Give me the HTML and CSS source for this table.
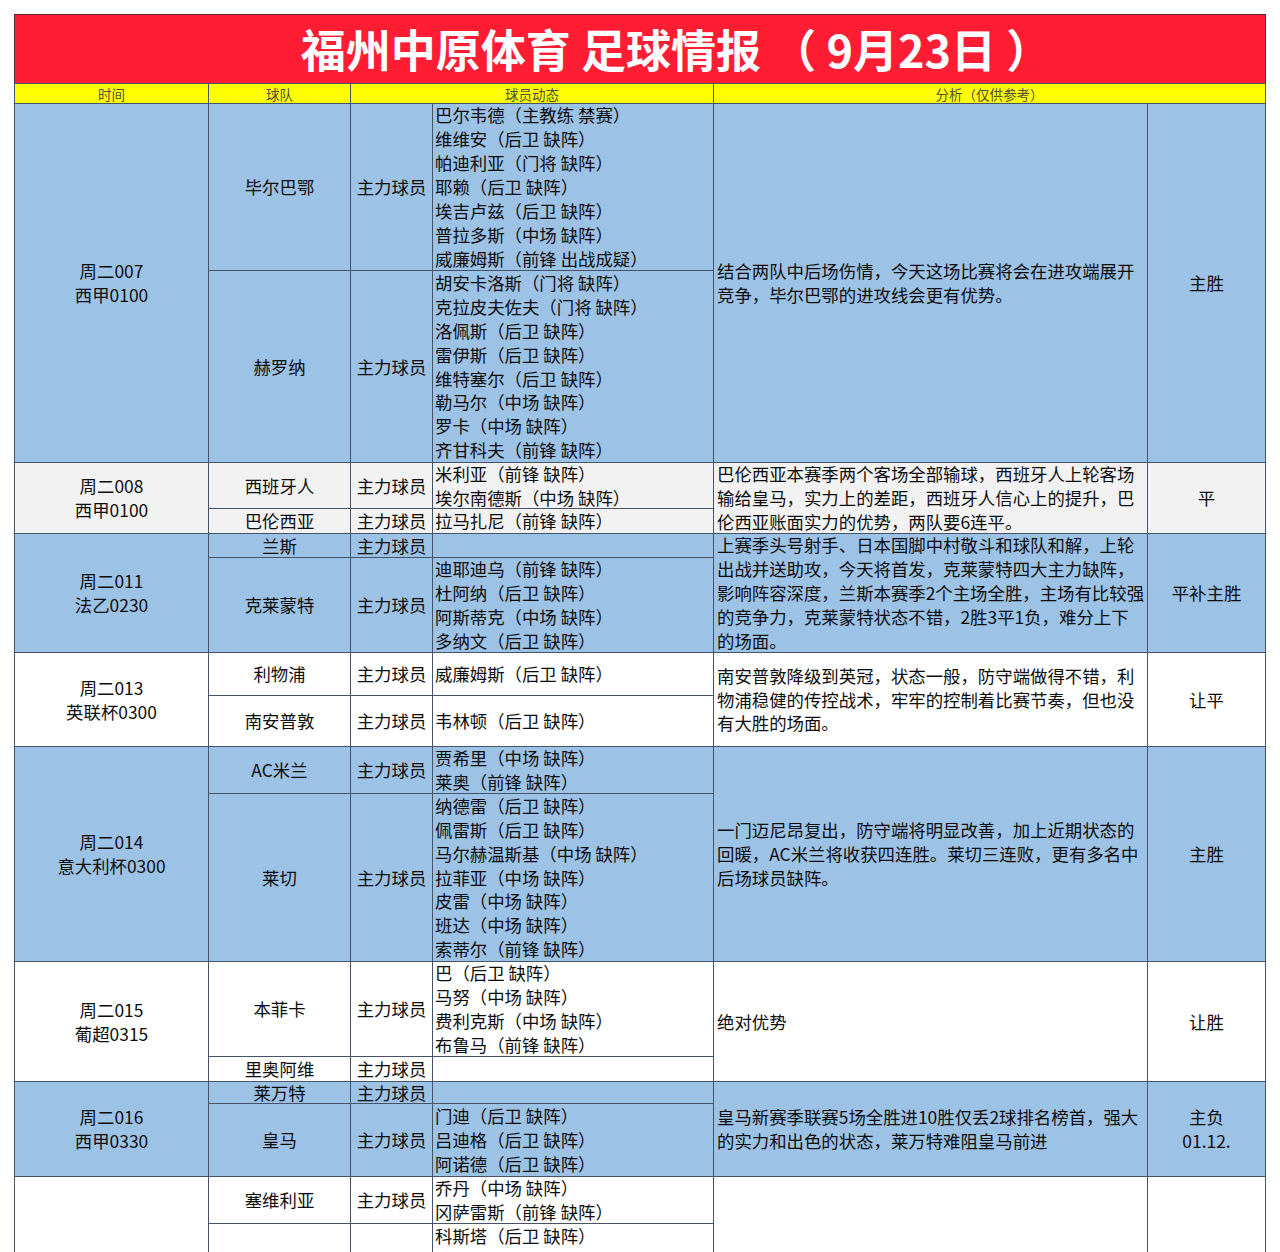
FILE: index.html
```html
<!DOCTYPE html>
<html lang="zh-CN">
<head>
<meta charset="utf-8">
<title>福州中原体育 足球情报</title>
<link rel="stylesheet" href="styles.css">
</head>
<body>
<div class="page">
  <div class="sheet">
    <div class="banner">福州中原体育 足球情报 （ 9月23日 ）</div>
    <div class="grid">
      <div class="hdr">时间</div>
      <div class="hdr">球队</div>
      <div class="hdr span2">球员动态</div>
      <div class="hdr span2">分析（仅供参考）</div>

      <div class="group blue">
        <div class="time">周二007<br>西甲0100</div>
        <div class="team">毕尔巴鄂</div>
        <div class="lbl">主力球员</div>
        <div class="pl">巴尔韦德（主教练 禁赛）<br>维维安（后卫 缺阵）<br>帕迪利亚（门将 缺阵）<br>耶赖（后卫 缺阵）<br>埃吉卢兹（后卫 缺阵）<br>普拉多斯（中场 缺阵）<br>威廉姆斯（前锋 出战成疑）</div>
        <div class="ana">结合两队中后场伤情，今天这场比赛将会在进攻端展开<br>竞争，毕尔巴鄂的进攻线会更有优势。</div>
        <div class="res">主胜</div>
        <div class="team">赫罗纳</div>
        <div class="lbl">主力球员</div>
        <div class="pl">胡安卡洛斯（门将 缺阵）<br>克拉皮夫佐夫（门将 缺阵）<br>洛佩斯（后卫 缺阵）<br>雷伊斯（后卫 缺阵）<br>维特塞尔（后卫 缺阵）<br>勒马尔（中场 缺阵）<br>罗卡（中场 缺阵）<br>齐甘科夫（前锋 缺阵）</div>
      </div>

      <div class="group gray">
        <div class="time">周二008<br>西甲0100</div>
        <div class="team">西班牙人</div>
        <div class="lbl">主力球员</div>
        <div class="pl">米利亚（前锋 缺阵）<br>埃尔南德斯（中场 缺阵）</div>
        <div class="ana">巴伦西亚本赛季两个客场全部输球，西班牙人上轮客场<br>输给皇马，实力上的差距，西班牙人信心上的提升，巴<br>伦西亚账面实力的优势，两队要6连平。</div>
        <div class="res">平</div>
        <div class="team">巴伦西亚</div>
        <div class="lbl">主力球员</div>
        <div class="pl">拉马扎尼（前锋 缺阵）</div>
      </div>

      <div class="group blue">
        <div class="time">周二011<br>法乙0230</div>
        <div class="team">兰斯</div>
        <div class="lbl">主力球员</div>
        <div class="pl"></div>
        <div class="ana">上赛季头号射手、日本国脚中村敬斗和球队和解，上轮<br>出战并送助攻，今天将首发，克莱蒙特四大主力缺阵，<br>影响阵容深度，兰斯本赛季2个主场全胜，主场有比较强<br>的竞争力，克莱蒙特状态不错，2胜3平1负，难分上下<br>的场面。</div>
        <div class="res">平补主胜</div>
        <div class="team">克莱蒙特</div>
        <div class="lbl">主力球员</div>
        <div class="pl">迪耶迪乌（前锋 缺阵）<br>杜阿纳（后卫 缺阵）<br>阿斯蒂克（中场 缺阵）<br>多纳文（后卫 缺阵）</div>
      </div>

      <div class="group white">
        <div class="time">周二013<br>英联杯0300</div>
        <div class="team">利物浦</div>
        <div class="lbl">主力球员</div>
        <div class="pl">威廉姆斯（后卫 缺阵）</div>
        <div class="ana">南安普敦降级到英冠，状态一般，防守端做得不错，利<br>物浦稳健的传控战术，牢牢的控制着比赛节奏，但也没<br>有大胜的场面。</div>
        <div class="res">让平</div>
        <div class="team">南安普敦</div>
        <div class="lbl">主力球员</div>
        <div class="pl">韦林顿（后卫 缺阵）</div>
      </div>

      <div class="group blue">
        <div class="time">周二014<br>意大利杯0300</div>
        <div class="team">AC米兰</div>
        <div class="lbl">主力球员</div>
        <div class="pl">贾希里（中场 缺阵）<br>莱奥（前锋 缺阵）</div>
        <div class="ana">一门迈尼昂复出，防守端将明显改善，加上近期状态的<br>回暖，AC米兰将收获四连胜。莱切三连败，更有多名中<br>后场球员缺阵。</div>
        <div class="res">主胜</div>
        <div class="team">莱切</div>
        <div class="lbl">主力球员</div>
        <div class="pl">纳德雷（后卫 缺阵）<br>佩雷斯（后卫 缺阵）<br>马尔赫温斯基（中场 缺阵）<br>拉菲亚（中场 缺阵）<br>皮雷（中场 缺阵）<br>班达（中场 缺阵）<br>索蒂尔（前锋 缺阵）</div>
      </div>

      <div class="group white">
        <div class="time">周二015<br>葡超0315</div>
        <div class="team">本菲卡</div>
        <div class="lbl">主力球员</div>
        <div class="pl">巴（后卫 缺阵）<br>马努（中场 缺阵）<br>费利克斯（中场 缺阵）<br>布鲁马（前锋 缺阵）</div>
        <div class="ana">绝对优势</div>
        <div class="res">让胜</div>
        <div class="team">里奥阿维</div>
        <div class="lbl">主力球员</div>
        <div class="pl"></div>
      </div>

      <div class="group blue">
        <div class="time">周二016<br>西甲0330</div>
        <div class="team">莱万特</div>
        <div class="lbl">主力球员</div>
        <div class="pl"></div>
        <div class="ana">皇马新赛季联赛5场全胜进10胜仅丢2球排名榜首，强大<br>的实力和出色的状态，莱万特难阻皇马前进</div>
        <div class="res">主负<br>01.12.</div>
        <div class="team">皇马</div>
        <div class="lbl">主力球员</div>
        <div class="pl">门迪（后卫 缺阵）<br>吕迪格（后卫 缺阵）<br>阿诺德（后卫 缺阵）</div>
      </div>

      <div class="group white">
        <div class="time"></div>
        <div class="team">塞维利亚</div>
        <div class="lbl">主力球员</div>
        <div class="pl">乔丹（中场 缺阵）<br>冈萨雷斯（前锋 缺阵）</div>
        <div class="ana"></div>
        <div class="res"></div>
        <div class="team"></div>
        <div class="lbl"></div>
        <div class="pl top">科斯塔（后卫 缺阵）<br>福伊特（后卫 缺阵）</div>
      </div>
    </div>
  </div>
</div>
</body>
</html>
```

FILE: styles.css
```css
html, body {
  margin: 0;
  padding: 0;
  background: #ffffff;
}

.page {
  width: 1280px;
  height: 1252px;
  overflow: hidden;
  background: #ffffff;
  font-family: "Noto Sans CJK SC", "Noto Sans", sans-serif;
  color: #0d0d0d;
}

.sheet {
  padding: 14px 0 0 14px;
  width: 1252px;
}

.banner {
  box-sizing: border-box;
  width: 1252px;
  height: 69px;
  background: #ff1d34;
  border: 1px solid #5a2a30;
  border-bottom: none;
  color: #ffffff;
  font-weight: 700;
  font-size: 45px;
  line-height: 68px;
  text-align: center;
  padding-left: 72px;
  white-space: pre;
}

.grid {
  display: grid;
  width: 1252px;
  box-sizing: border-box;
  border: 1px solid #46546a;
  border-bottom: none;
  background: #46546a;
  gap: 1px;
  grid-template-columns: 193px 141px 81px 280px 433px 117px;
  grid-template-rows:
    19px
    166px 191px
    45px 24px
    23px 94px
    42px 50px
    46px 167px
    94px 24px
    21px 72px
    46px 160px;
  font-size: 17.4px;
  line-height: 23.9px;
}

.group {
  display: contents;
}

.hdr {
  background: #ffff00;
  font-size: 13.5px;
  line-height: 18px;
  color: #505040;
  display: flex;
  align-items: center;
  justify-content: center;
  white-space: nowrap;
}

.span2 {
  grid-column: span 2;
}

.time, .ana, .res {
  grid-row: span 2;
}

.time, .team, .lbl, .pl, .ana, .res {
  display: flex;
  align-items: center;
  white-space: nowrap;
  min-width: 0;
}

.time, .team, .lbl, .res {
  justify-content: center;
  text-align: center;
}

.pl {
  justify-content: flex-start;
  padding-left: 2px;
}

.pl.top {
  align-items: flex-start;
}

.ana {
  justify-content: flex-start;
  padding-left: 3px;
}

.blue > div  { background: #9cc2e6; }
.gray > div  { background: #f2f2f2; }
.white > div { background: #ffffff; }
```
